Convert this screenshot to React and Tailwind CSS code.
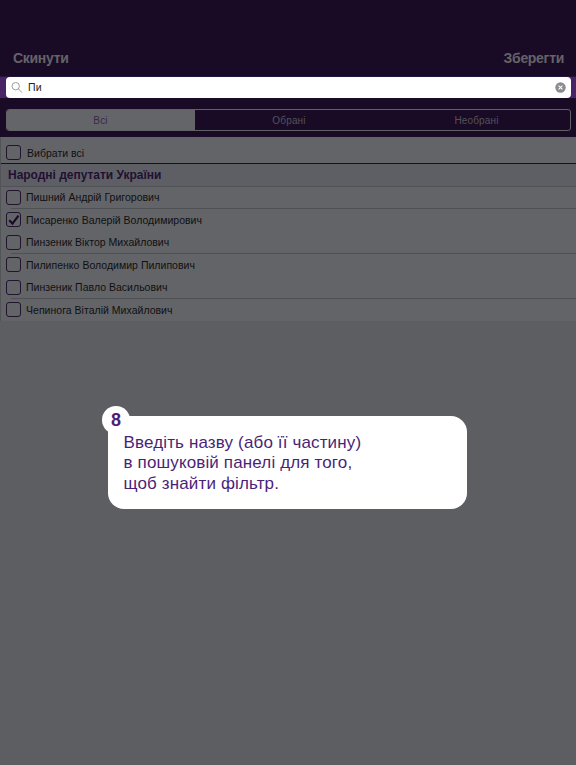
import React from "react";

const people = [
  { name: "Пишний Андрій Григорович", line: true },
  { name: "Писаренко Валерій Володимирович", checked: true },
  { name: "Пинзеник Віктор Михайлович", line: true },
  { name: "Пилипенко Володимир Пилипович" },
  { name: "Пинзеник Павло Васильович", line: true },
  { name: "Чепинога Віталій Михайлович" },
];

function Checkbox({ checked }) {
  return (
    <span className="flex h-[15px] w-[15px] shrink-0 items-center justify-center rounded-[3px] border-[1.3px] border-[#21152d]">
      {checked && (
        <svg viewBox="0 0 12 12" className="h-3 w-3 shrink-0" fill="none" stroke="#190b26" strokeWidth="2.1">
          <path d="M1.2 6.3 4.5 9.6 10.5 1.6" />
        </svg>
      )}
    </span>
  );
}

export default function App() {
  return (
    <div className="relative flex h-[765px] w-[576px] flex-col overflow-hidden bg-[#5d5e62] font-['Liberation_Sans',Arial,sans-serif]">
      <header className="flex h-[137px] shrink-0 flex-col bg-[#190b26]">
        <div className="flex h-[77px] items-end justify-between border-b border-[#26123a] px-[13px] pb-[10px] text-[14px] leading-4 font-bold tracking-[-0.3px] text-[#656369]">
          <span>Скинути</span>
          <span className="-mr-px">Зберегти</span>
        </div>
        <div className="h-[21px] bg-[#482467] pr-[5px] pl-[6px]">
          <div className="flex h-[21px] items-center rounded-[4px] bg-white pr-[5px] pl-[5px]">
            <svg viewBox="0 0 12 12" className="h-[12px] w-[12px]" fill="none" stroke="#929297" strokeWidth="0.9">
              <circle cx="4.7" cy="4.2" r="3.7" />
              <path d="m7.4 6.9 3.6 3.6" />
            </svg>
            <span className="ml-[5px] pb-[2px] text-[10.5px] leading-3 tracking-[0.2px] text-[#222]">Пи</span>
            <svg viewBox="0 0 11 11" className="ml-auto h-[11px] w-[11px]">
              <circle cx="5.5" cy="5.5" r="5.2" fill="#8b8b90" />
              <path d="m3.6 3.6 3.8 3.8m0-3.8L3.6 7.4" stroke="#fff" strokeWidth="1.1" />
            </svg>
          </div>
        </div>
        <div className="mt-[11px] mr-[5px] ml-[6px] flex h-[22px] overflow-hidden rounded-[3px] border border-[#626165] text-[10px] leading-[21px] tracking-[0.15px] text-[#55515b]">
          <span className="w-[188px] bg-[#646568] pr-px text-center text-[#39294a]">Всі</span>
          <span className="w-[188px] text-center">Обрані</span>
          <span className="flex-1 text-center">Необрані</span>
        </div>
      </header>

      <main className="flex shrink-0 flex-col border-l border-[#535458] bg-[#636467] text-[10.5px] tracking-[0.02px] text-[#101012]">
        <div className="flex h-[27px] items-center border-b border-[#1d0d2b] pt-[5px] pl-[5px]">
          <Checkbox />
          <span className="ml-[6px] leading-3">Вибрати всі</span>
        </div>
        <div className="flex h-[23px] items-center border-b border-[#515257] bg-[#5e5f64] pl-[7px] text-[12px] font-bold tracking-[-0.02px] text-[#211033]">
          <span>Народні депутати України</span>
        </div>
        <div className="-mt-[0.8px] flex flex-col">
          {people.map((p) => (
            <div key={p.name} className="flex h-[22.5px] flex-col">
              <div className="flex h-[21.5px] items-center pt-[0.6px] pl-[5px]">
                <Checkbox checked={p.checked} />
                <span className="ml-[5px] leading-3 whitespace-nowrap">{p.name}</span>
              </div>
              <div className={p.line ? "ml-[10px] h-px bg-[#505155]" : "h-px"} />
            </div>
          ))}
        </div>
      </main>

      <section className="absolute top-[416px] left-[108px] h-[93px] w-[359px] rounded-[16px] bg-white pt-[17px] pl-[15.5px] text-[17px] leading-[20.4px] tracking-[0.14px] text-[#4b1f78]">
        <span className="absolute -top-[10px] -left-[6px] flex h-[28px] w-[28px] items-center justify-center rounded-full bg-white pt-px text-[18px] font-bold">
          8
        </span>
        <p className="whitespace-nowrap">Введіть назву (або її частину)</p>
        <p className="whitespace-nowrap">в пошуковій панелі для того,</p>
        <p className="whitespace-nowrap">щоб знайти фільтр.</p>
      </section>
    </div>
  );
}
